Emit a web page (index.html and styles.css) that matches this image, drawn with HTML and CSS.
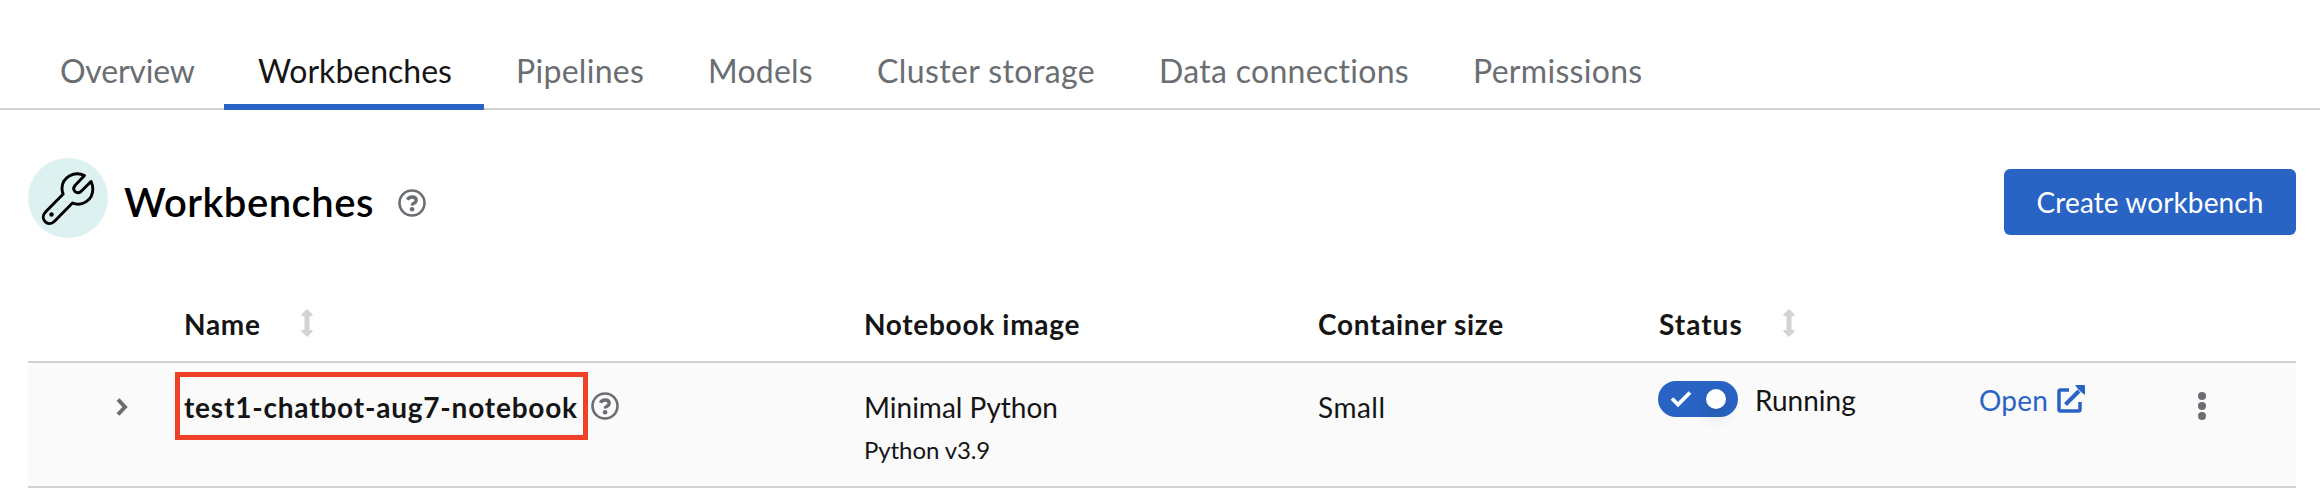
FILE: index.html
```
<!DOCTYPE html>
<html lang="en">
<head>
<meta charset="utf-8">
<title>Workbenches</title>
<link rel="stylesheet" href="styles.css">
</head>
<body>
<svg class="defs" width="0" height="0">
  <symbol id="help" viewBox="0 0 28 28">
    <circle cx="14" cy="14" r="12.5" fill="none" stroke="currentColor" stroke-width="2.6"/>
    <path d="M9.500 10.800C10.400 8.900 12 8 14.100 8c2.400 0 4.100 1.300 4.100 3.300 0 1.600-.9 2.300-2.200 3-1.200.6-1.800 1-1.800 2.100" fill="none" stroke="currentColor" stroke-width="3.400"/>
    <circle cx="14.100" cy="20.300" r="2.300" fill="currentColor"/>
  </symbol>
  <symbol id="sort" viewBox="0 0 12 28">
    <path d="M6 0 11.600 5.600Q12.200 7 10.700 7H8.500v14h2.200q1.500 0 .9 1.400L6 28 .4 22.400Q-.2 21 1.300 21H3.500V7H1.300Q-.2 7 .4 5.600Z" fill="currentColor"/>
  </symbol>
</svg>
<nav class="tabs">
  <a class="tab t1">Overview</a>
  <a class="tab t2 active">Workbenches</a>
  <a class="tab t3">Pipelines</a>
  <a class="tab t4">Models</a>
  <a class="tab t5">Cluster storage</a>
  <a class="tab t6">Data connections</a>
  <a class="tab t7">Permissions</a>
</nav>
<header class="head">
  <span class="badge">
    <svg width="80" height="80" viewBox="0 0 80 80" fill="none" stroke="#000" stroke-width="2.900" stroke-linejoin="round">
      <path d="M56.500 17.500C46 12.500 34 19.500 34 30.500c0 2 .4 3.800 1.200 5.500L17.500 54c-6.500 7 2.500 15.500 9 9.300L44.500 45C54 49 65 42 64.800 31c0-3-.6-5-1.800-7.500L53 33.500c-4.500 3.500-9.500-1.500-6-6Z"/>
      <circle cx="23.500" cy="56.500" r="2.200" fill="#000" stroke="none"/>
    </svg>
  </span>
  <h1>Workbenches</h1>
  <svg class="help" width="28" height="28"><use href="#help"/></svg>
  <button class="create"><span>Create workbench</span></button>
</header>
<section class="table">
  <div class="row thead">
    <div></div>
    <div class="cell name"><span class="n1">Name</span><svg class="sort" width="12" height="28"><use href="#sort"/></svg></div>
    <div class="cell"><span class="n2">Notebook image</span></div>
    <div class="cell"><span class="n3">Container size</span></div>
    <div class="cell status"><span class="n4">Status</span><svg class="sort" width="12" height="28"><use href="#sort"/></svg></div>
  </div>
  <div class="row body">
    <div class="expand"><svg width="14" height="20" viewBox="0 0 14 20"><path d="M3 2.500 10 10 3 17.500" fill="none" stroke="#6a6e73" stroke-width="4"/></svg></div>
    <div class="cell"><span class="mark"><span class="wb">test1-chatbot-aug7-notebook</span></span><svg class="rowhelp" width="28" height="28"><use href="#help"/></svg></div>
    <div class="cell stack"><span class="c1">Minimal Python</span><span class="small c2">Python v3.9</span></div>
    <div class="cell stack"><span class="c3">Small</span></div>
    <div class="cell state">
      <span class="switch"><svg width="22" height="18" viewBox="0 0 22 18"><path d="m2 8.500 6 6L20 2.500" fill="none" stroke="#fff" stroke-width="3.800"/></svg><i class="knob"></i></span>
      <span class="c4">Running</span>
    </div>
    <div class="cell link"><span class="c5">Open</span>
      <svg width="28" height="28" viewBox="0 0 28 28" fill="none" stroke="currentColor" stroke-width="3.500"><path d="M12 5H3.500Q2 5 2 6.500v18Q2 26 3.500 26h18q1.500 0 1.500-1.500V17"/><path d="M8.500 19.500 22 6" stroke-width="4"/><path d="M18 0h9q1 0 1 1v9l-4-3-3-3Z" fill="currentColor" stroke="none"/></svg>
    </div>
    <div class="kebab"><i></i><i></i><i></i></div>
  </div>
</section>
</body>
</html>
```
FILE: styles.css
```
* { box-sizing: border-box; }
body { margin: 0; background: #fff; color: #151515; font-family: Lato, "Liberation Sans", sans-serif; font-size: 28px; line-height: 42px; white-space: nowrap; overflow: hidden; font-variant-ligatures: none; }
.defs { position: absolute; }
.tabs { display: flex; height: 110px; padding: 32px 0 0 28px; border-bottom: 2px solid #d2d2d2; font-size: 32px; color: #6a6e73; }
.tab { height: 78px; padding: 18px 0 0 32px; }
.active { color: #151515; border-bottom: 6px solid #2964c5; }
.t1 { width: 196px; letter-spacing: -.2px; } .t2 { width: 260px; padding-left: 34px; } .t3 { width: 192px; letter-spacing: .3px; } .t4 { width: 168px; letter-spacing: .2px; } .t5 { width: 283px; padding-left: 33px; letter-spacing: .4px; } .t6 { width: 314px; letter-spacing: .3px; } .t7 { letter-spacing: .3px; }
.head { display: flex; align-items: center; height: 80px; margin: 48px 24px 0 28px; }
.badge { width: 80px; height: 80px; border-radius: 50%; background: #ddf1f0; }
.badge svg { display: block; }
h1 { width: 274px; margin: 8px 0 0 16px; font-size: 40px; font-weight: 600; letter-spacing: .5px; color: #000; }
.help { margin-top: 10px; color: #6a6e73; }
.create { width: 292px; height: 66px; margin: 8px 0 0 auto; padding: 0; border: 0; border-radius: 6px; background: #2964c5; color: #fff; font: inherit; letter-spacing: .1px; }
.table { margin: 53px 24px 0 28px; }
.row { display: grid; grid-template-columns: 156px 680px 454px 341px 320px 201px 1fr; border-bottom: 2px solid #d2d2d2; }
.thead { height: 72px; padding-top: 12px; font-weight: 700; letter-spacing: .7px; }
.cell { display: flex; align-items: flex-start; }
.sort { color: #d2d2d2; margin-top: 6px; }
.n1 { width: 117px; } .n4 { width: 124px; letter-spacing: 1px; }
.body { height: 125px; background: #fafafa; }
.expand { padding: 34px 0 0 87px; }
.expand svg { display: block; }
.mark { width: 413px; height: 68px; margin: 9px 0 0 -9px; padding: 9px 0 0 4px; border: 5px solid #ee4127; font-weight: 700; letter-spacing: .8px; }
.rowhelp { margin: 29px 0 0 3px; color: #6a6e73; }
.stack { flex-direction: column; padding-top: 23px; }
.c3 { letter-spacing: .5px; }
.small { font-size: 24px; line-height: 36px; margin-top: 4px; letter-spacing: -.1px; }
.state { padding: 16px 0 0; }
.switch { display: flex; align-items: center; width: 80px; height: 36px; margin: 2px 17px 0 -1px; padding: 0 12px; border-radius: 18px; background: #2964c5; justify-content: space-between; }
.knob { width: 20px; height: 20px; border-radius: 50%; background: #fff; box-shadow: 0 8px 16px rgba(3,3,3,.16); }
.link { padding-top: 16px; color: #2964c5; gap: 9px; }
.c5 { letter-spacing: .2px; }
.link svg { margin-top: 6px; }
.kebab { display: flex; flex-direction: column; gap: 2px; padding: 29px 0 0 18px; }
.kebab i { width: 8px; height: 8px; border-radius: 50%; background: #6a6e73; }
```
